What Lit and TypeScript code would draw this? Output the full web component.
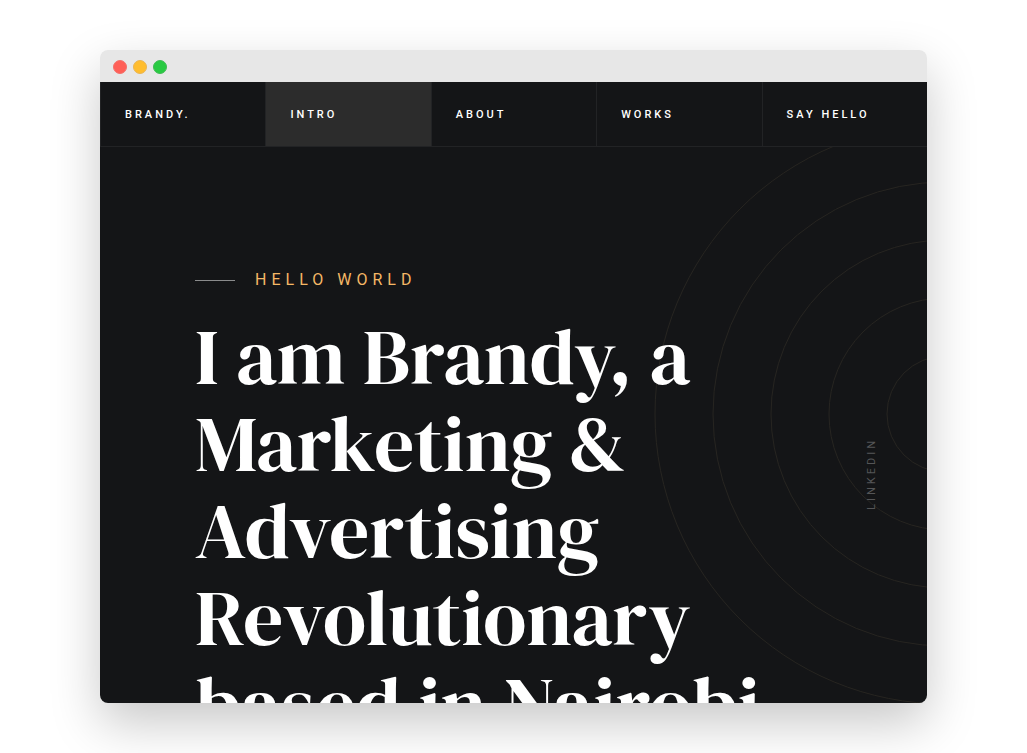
import { LitElement, html, svg, css } from "lit";
import { customElement, state } from "lit/decorators.js";
import { classMap } from "lit/directives/class-map.js";

const LINKS = ["Brandy.", "Intro", "About", "Works", "Say Hello"];
const RINGS = [58, 116, 174, 232, 290];

@customElement("app-root")
export class AppRoot extends LitElement {
  @state() private active = "Intro";

  static styles = css`
    :host {
      display: flex;
      box-sizing: border-box;
      height: 100vh;
      padding: 50px 100px;
      overflow: hidden;
      background: #fff;
      font-family: Roboto, "Liberation Sans", sans-serif;
    }
    .window {
      flex: 1;
      min-width: 0;
      display: flex;
      flex-direction: column;
      overflow: hidden;
      border-radius: 8px;
      box-shadow: 0 20px 50px rgba(0, 0, 0, 0.22);
    }
    .titlebar {
      flex: none;
      display: flex;
      align-items: center;
      height: 32px;
      padding: 2px 13px 0;
      gap: 6px;
      box-sizing: border-box;
      background: #e7e7e7;
    }
    .dot {
      width: 14px;
      height: 14px;
      box-sizing: border-box;
      border-radius: 50%;
      border: 1px solid;
    }
    .close { background: #ff5f57; border-color: #f4706a; }
    .minimize { background: #ffbd2e; border-color: #eab552; }
    .zoom { background: #28ca42; border-color: #3fbb53; }
    .nav {
      flex: none;
      display: grid;
      grid-template-columns: repeat(5, 1fr);
      border-bottom: 1px solid #222325;
      background: #141517;
    }
    .nav-link {
      padding: 26px 24px 24px;
      border-left: 1px solid #222325;
      color: #fff;
      font-size: 11px;
      font-weight: 500;
      line-height: 14px;
      letter-spacing: 3px;
      text-transform: uppercase;
      text-decoration: none;
      white-space: nowrap;
    }
    .active { background: #2c2c2c; }
    .hero {
      position: relative;
      flex: 1;
      min-height: 0;
      display: flex;
      justify-content: space-between;
      padding: 0 49px 0 95px;
      overflow: hidden;
      background: #141517;
    }
    .rings {
      position: absolute;
      top: calc(48% - 291px);
      right: -309px;
      width: 582px;
      height: 582px;
      fill: none;
      stroke: #272521;
    }
    .copy {
      position: relative;
      max-width: 632px;
      padding-top: 120px;
    }
    .eyebrow {
      display: flex;
      align-items: center;
      gap: 20px;
      margin: 0 0 20px;
      color: #f5b866;
      font-size: 16px;
      line-height: 26px;
      letter-spacing: 5px;
      text-transform: uppercase;
    }
    .rule {
      width: 40px;
      height: 1px;
      background: #8a8b8c;
    }
    .title {
      margin: 0;
      color: #fff;
      font-family: "DM Serif Display", "Liberation Serif", serif;
      font-size: 79px;
      font-weight: 400;
      line-height: 87px;
    }
    .social {
      position: relative;
      align-self: flex-start;
      padding-top: 291px;
      font-size: 11px;
      line-height: 12px;
    }
    .social-link {
      display: block;
      writing-mode: vertical-rl;
      transform: rotate(180deg);
      color: #555557;
      letter-spacing: 3px;
      text-transform: uppercase;
      text-decoration: none;
    }
  `;

  private select(event: Event, name: string) {
    event.preventDefault();
    this.active = name;
  }

  render() {
    return html`
      <div class="window">
        <div class="titlebar">
          <span class="dot close"></span>
          <span class="dot minimize"></span>
          <span class="dot zoom"></span>
        </div>
        <nav class="nav">
          ${LINKS.map(
            (name) => html`<a
              class=${classMap({ "nav-link": true, active: name === this.active })}
              href="#"
              @click=${(e: Event) => this.select(e, name)}
              >${name}</a
            >`
          )}
        </nav>
        <main class="hero">
          <svg class="rings" viewBox="-291 -291 582 582" aria-hidden="true">
            ${RINGS.map((r) => svg`<circle r=${r}></circle>`)}
          </svg>
          <div class="copy">
            <p class="eyebrow"><span class="rule"></span>Hello World</p>
            <h1 class="title">
              I am Brandy, a Marketing &amp; Advertising Revolutionary based in Nairobi
            </h1>
          </div>
          <div class="social"><a class="social-link" href="#">LinkedIn</a></div>
        </main>
      </div>
    `;
  }
}
